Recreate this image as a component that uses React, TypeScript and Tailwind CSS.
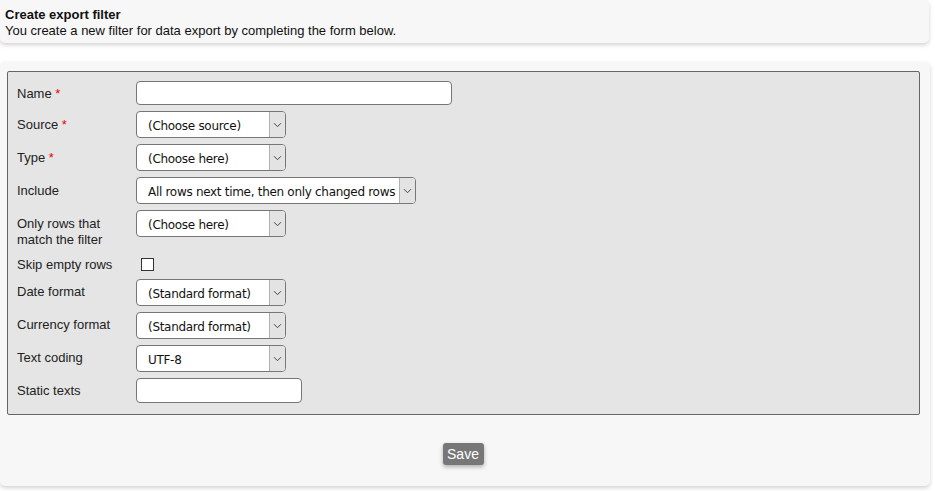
import React from "react";

const labelFont = { fontFamily: '"Liberation Sans", Arial, sans-serif' };
const selFont = { fontFamily: '"DejaVu Sans", Verdana, sans-serif' };

function Chevron() {
  return (
    <svg width="9" height="6" viewBox="0 0 9 6" fill="none">
      <path d="M1 1.2 L4.5 4.7 L8 1.2" stroke="#444" strokeWidth="1" />
    </svg>
  );
}

function Select({ text, w }: { text: string; w: string }) {
  return (
    <div className={`flex h-[27px] ${w} overflow-hidden rounded-[4px] border border-[#767676] bg-white`}>
      <div className="flex flex-1 items-center overflow-hidden whitespace-nowrap pl-[11px] pt-[2px] text-[12px] tracking-[-0.3px] text-[#111]" style={selFont}>
        {text}
      </div>
      <div className="flex w-[16px] items-center justify-center border-l border-[#b0b0b0] bg-[#e3e3e3]">
        <Chevron />
      </div>
    </div>
  );
}

function Row({ label, req, children, pt = "pt-[5px]" }: { label: React.ReactNode; req?: boolean; children: React.ReactNode; pt?: string }) {
  return (
    <div className="flex items-start">
      <div className={`w-[128px] shrink-0 pl-[9px] ${pt} text-[13px] leading-[16px] text-[#222]`} style={labelFont}>
        {label}
        {req && <span className="text-[#e00]"> *</span>}
      </div>
      {children}
    </div>
  );
}

export default function App() {
  return (
    <div className="min-h-[491px] w-[935px] bg-white" style={labelFont}>
      <div className="mr-[6px] h-[43px] rounded-b-[5px] rounded-tr-[5px] bg-[#f7f7f7] pl-[5px] pt-[7px] text-[13px] leading-[16px] text-[#111] shadow-[0_2px_4px_rgba(0,0,0,0.18)]">
        <div className="font-bold">Create export filter</div>
        <div>You create a new filter for data export by completing the form below.</div>
      </div>
      <div className="mr-[5px] mt-[19px] h-[424px] rounded-[5px] bg-[#f7f7f7] pl-[7px] pr-[10px] pt-[9px] shadow-[0_2px_4px_rgba(0,0,0,0.18)]">
        <div className="flex flex-col gap-[6px] rounded-[2px] border border-[#666] bg-[#e5e5e5] pb-[11px] pt-[9px]">
          <Row label="Name" req>
            <div className="h-[24px] w-[316px] rounded-[4px] border border-[#767676] bg-white" />
          </Row>
          <Row label="Source" req pt="pt-[6px]">
            <Select text="(Choose source)" w="w-[150px]" />
          </Row>
          <Row label="Type" req pt="pt-[6px]">
            <Select text="(Choose here)" w="w-[150px]" />
          </Row>
          <Row label="Include" pt="pt-[6px]">
            <Select text="All rows next time, then only changed rows" w="w-[280px]" />
          </Row>
          <Row label={<>Only rows that<br />match the filter</>} pt="pt-[6px] -mb-[1px]">
            <Select text="(Choose here)" w="w-[150px]" />
          </Row>
          <Row label="Skip empty rows" pt="pt-[4px]">
            <div className="ml-[5px] mt-[5px] h-[13px] w-[13px] border border-[#333] bg-white" />
          </Row>
          <Row label="Date format">
            <Select text="(Standard format)" w="w-[150px]" />
          </Row>
          <Row label="Currency format">
            <Select text="(Standard format)" w="w-[150px]" />
          </Row>
          <Row label="Text coding">
            <Select text="UTF-8" w="w-[150px]" />
          </Row>
          <Row label="Static texts">
            <div className="h-[25px] w-[166px] rounded-[4px] border border-[#767676] bg-white" />
          </Row>
        </div>
        <div className="mt-[28px] flex justify-center pr-[1px]">
          <div className="flex h-[22px] w-[41px] items-center justify-center rounded-[3px] bg-[#777] text-[14px] text-white shadow-[0_2px_4px_rgba(0,0,0,0.3)]">
            Save
          </div>
        </div>
      </div>
    </div>
  );
}
